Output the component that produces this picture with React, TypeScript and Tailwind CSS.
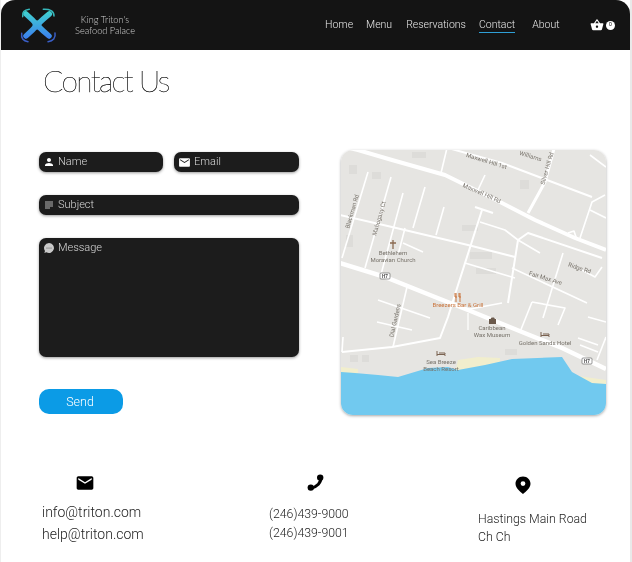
import { MdEmail, MdPerson, MdShoppingBasket, MdSubject } from "react-icons/md";
import type { ReactNode } from "react";

const roboto = "font-['Roboto',sans-serif]";

const navLinks = [
  { label: "Home", className: "border-transparent" },
  { label: "Menu", className: "ml-[13px] border-transparent" },
  { label: "Reservations", className: "ml-[14px] border-transparent" },
  { label: "Contact", className: "ml-[13px] border-[#2f9fd6]" },
  { label: "About", className: "ml-[17px] border-transparent" },
];

// every road is [width, points], in page coordinates
const roads: [number, string][] = [
  [4, "340,146 358,150 392,160 445,175 502,203 535,220 575,238 606,250"],
  [2, "448,148 502,163 592,197"],
  [3, "555,145 545,182 528,213"],
  [4.5, "340,263 385,277 435,297 468,310 522,332 562,348 606,369"],
  [2, "340,215 392,227 468,245 515,257"],
  [1.6, "368,172 342,258"],
  [1.6, "391,177 365,268"],
  [1.6, "403,193 380,278"],
  [1.6, "425,187 413,228"],
  [1.6, "444,207 436,235"],
  [1.6, "447,148 441,173"],
  [1.6, "485,175 477,192"],
  [2, "482,210 458,285 448,317 440,338 392,347 342,352"],
  [2, "475,207 493,213"],
  [1.6, "480,222 505,230 518,240 540,253"],
  [2, "508,303 518,240 528,233 602,258"],
  [1.6, "502,303 465,310"],
  [1.6, "465,263 515,278"],
  [1.6, "512,268 587,303"],
  [1.6, "563,253 543,318"],
  [1.6, "532,302 520,332"],
  [1.6, "532,302 565,308 558,325"],
  [1.6, "602,267 595,277 582,270"],
  [1.6, "605,195 592,202 580,238"],
  [1.6, "590,210 606,218"],
  [1.6, "590,155 606,167"],
  [1.6, "403,243 423,252"],
  [1.6, "405,228 398,255"],
  [1.6, "407,287 393,347"],
  [1.6, "378,300 430,318"],
  [1.6, "377,322 412,330"],
  [1.6, "343,337 342,352"],
  [1.2, "468,313 468,330"],
  [1.6, "588,317 606,322"],
  [1.6, "578,338 598,345"],
  [1.6, "580,345 598,352"],
  [1.6, "606,337 597,360"],
  [1.6, "568,233 574,231 577,240"],
];

const buildings = [
  "M349 165h8v9h-8z",
  "M372 172h9v7h-9z",
  "M346 235h7v12h-7z",
  "M412 152h14v6h-14z",
  "M462 225h16v6h-16z",
  "M470 252h22v7h-22z",
  "M476 268h20v6h-20z",
  "M520 180h9v9h-9z",
  "M505 355h12v-6h-12z",
  "M350 362h8v-7h-8z",
  "M362 362h7v-7h-7z",
];

const mapLabels: { x: number; y: number; text: string; fill?: string; rotate?: number }[] = [
  { x: 354, y: 212, text: "Blackman Rd", rotate: -74 },
  { x: 381, y: 219, text: "Mahogany Ct", rotate: -74 },
  { x: 486, y: 163, text: "Maxwell Hill 1st", rotate: 17 },
  { x: 481, y: 195, text: "Maxwell Hill Rd", rotate: 24 },
  { x: 549, y: 169, text: "Silver Hill Rd", rotate: -74 },
  { x: 530, y: 158, text: "Williams", rotate: 17 },
  { x: 545, y: 280, text: "Fair Max Ave", rotate: 17 },
  { x: 579, y: 270, text: "Ridge Rd", rotate: 18 },
  { x: 397, y: 321, text: "Dial Gardens", rotate: -77 },
  { x: 393, y: 255, text: "Bethlehem" },
  { x: 393, y: 262, text: "Moravian Church" },
  { x: 458, y: 307, text: "Breezers Bar & Grill", fill: "#c9743c" },
  { x: 492, y: 330, text: "Caribbean" },
  { x: 492, y: 337, text: "Wax Museum" },
  { x: 545, y: 345, text: "Golden Sands Hotel" },
  { x: 441, y: 364, text: "Sea Breeze" },
  { x: 441, y: 371, text: "Beach Resort" },
];

function Logo() {
  return (
    <svg width="40" height="40" viewBox="0 0 40 40" fill="none" className="shrink-0">
      <defs>
        <linearGradient id="droneBody" gradientUnits="userSpaceOnUse" x1="0" y1="7" x2="0" y2="33">
          <stop offset="0" stopColor="#40d0d0" />
          <stop offset="1" stopColor="#3b80ee" />
        </linearGradient>
      </defs>
      <path
        d="M7 9 Q14 15 18 20 Q24 14 30.3 9 M7 31 Q14 25 18 20 Q24 26 30 31"
        stroke="url(#droneBody)"
        strokeWidth="5.5"
        strokeLinecap="round"
      />
      <circle cx="18" cy="20" r="4.5" fill="url(#droneBody)" />
      <g strokeWidth="1.5" strokeLinecap="round">
        <path d="M3.7 11.7 C3 7 5 5 10.3 4.3" stroke="#36b8bb" />
        <path d="M24.3 4.3 C31 4 35 6 35 11" stroke="#36b8bb" />
        <path d="M2.7 28.3 C2 33 4 36 9 36.7" stroke="#3a5fc8" />
        <path d="M36 28 C37 33 34 36 29 36.7" stroke="#3a5fc8" />
      </g>
    </svg>
  );
}

function Header() {
  return (
    <header className="flex h-[50px] items-center rounded-t-[14px] bg-[#141414] pl-[18px] pr-[15px]">
      <Logo />
      <div className="ml-[11px] w-[70px] text-center font-['Lato',sans-serif] text-[9.2px] font-light leading-[11px] text-[#d4d4d4]">
        <div>King Triton's</div>
        <div>Seafood Palace</div>
      </div>
      <nav className={`ml-[185px] mt-[1px] flex items-center text-[10.5px] font-light text-[#e8e8e8] ${roboto}`}>
        {navLinks.map((link) => (
          <a key={link.label} className={`border-b leading-[14px] ${link.className}`}>
            {link.label}
          </a>
        ))}
      </nav>
      <div className="ml-auto flex items-center gap-[2px]">
        <MdShoppingBasket className="text-white" size={14} />
        <span className={`flex h-[9px] w-[9px] items-center justify-center rounded-full bg-white text-[5px] text-black ${roboto}`}>0</span>
      </div>
    </header>
  );
}

function Field({ icon, label, className }: { icon: ReactNode; label: string; className: string }) {
  return (
    <div className={`rounded-[7px] bg-[#1c1c1c] shadow-[0_1px_3px_rgba(0,0,0,0.4)] ${className}`}>
      <div className={`flex h-[20px] items-center gap-[3px] pl-[4px] text-[11px] font-light text-[#d8d8d8] ${roboto}`}>
        {icon}
        <span>{label}</span>
      </div>
    </div>
  );
}

function MessageIcon() {
  return (
    <svg width="12" height="12" viewBox="0 0 12 12" className="shrink-0">
      <path d="M6 1a5 5 0 1 1-2.6 9.3L1.3 11l.7-2.1A5 5 0 0 1 6 1z" fill="#c9c9c9" />
      <circle cx="4" cy="6" r="0.6" fill="#555555" />
      <circle cx="6" cy="6" r="0.6" fill="#555555" />
      <circle cx="8" cy="6" r="0.6" fill="#555555" />
    </svg>
  );
}

function PhoneIcon() {
  return (
    <svg width="18" height="18" viewBox="0 0 18 18" className="ml-[38px] block">
      <path d="M14 3 C14.5 8.5 10 13 3.5 14.5" fill="none" stroke="#000000" strokeWidth="3" />
      <circle cx="13.2" cy="3.6" r="3.2" fill="#000000" />
      <circle cx="3.8" cy="13.6" r="3.2" fill="#000000" />
    </svg>
  );
}

function PinIcon() {
  return (
    <svg width="16" height="18" viewBox="0 0 16 18" className="ml-[37px] block">
      <path
        fillRule="evenodd"
        d="M8 0.5C3.6 0.5 0.5 3.8 0.5 7.8C0.5 12 5 15.5 8 18C11 15.5 15.5 12 15.5 7.8C15.5 3.8 12.4 0.5 8 0.5ZM8 5.2A2.4 2.4 0 1 1 8 10A2.4 2.4 0 1 1 8 5.2Z"
        fill="#000000"
      />
    </svg>
  );
}

function MapView() {
  return (
    <div className="ml-[42px] h-[265px] w-[265px] overflow-hidden rounded-[12px] shadow-[0_1px_3px_rgba(0,0,0,0.35)]">
      <svg width="265" height="265" viewBox="341 150 265 265" className="block bg-[#e6e5e2]">
        {buildings.map((d) => (
          <path key={d} d={d} fill="#dddcd9" />
        ))}
        <path d="M341 367 L358 369 L358 376 L341 376 Z" fill="#f1eecd" />
        <path d="M455 372 L458 360 L478 357 L500 358 L500 372 Z" fill="#f1eecd" />
        <path d="M578 376 L606 380 L606 388 L585 385 Z" fill="#f1eecd" />
        {roads.map(([width, points]) => (
          <polyline key={points} points={points} fill="none" stroke="#ffffff" strokeWidth={width} strokeLinejoin="round" />
        ))}
        <path d="M341 372 L355 373 L378 375 L398 377 L428 368 L448 367 L458 370 L485 365 L512 359 L562 357 L572 372 L592 383 L606 384 L606 415 L341 415 Z" fill="#71c9ef" />
        <g fontFamily="Roboto, sans-serif" fontSize="6" fill="#77726a" textAnchor="middle">
          {mapLabels.map((item) => (
            <text
              key={item.text}
              x={item.x}
              y={item.y}
              fill={item.fill}
              transform={item.rotate ? `rotate(${item.rotate} ${item.x} ${item.y})` : undefined}
            >
              {item.text}
            </text>
          ))}
        </g>
        <path d="M393 240 V249 M390 243 H396" stroke="#8a6a50" strokeWidth="1.3" />
        <path d="M456 293 V302 M460 293 V302 M455 293 V297 H457 M459 293 V297 H461" stroke="#c9743c" strokeWidth="1" fill="none" />
        <path d="M489 319 H490.5 L491.5 317.5 H494 L495 319 H496 V324 H489 Z" fill="#6b5a4c" />
        <g fill="none" stroke="#7a6250" strokeWidth="1">
          <path d="M437 351 V356 M437 354.5 H445 V356" />
          <path d="M439 353 H445 V354" />
          <path d="M541 332 V337 M541 335.5 H549 V337" />
          <path d="M543 334 H549 V335" />
        </g>
        <g fontFamily="Roboto, sans-serif" fontSize="4.5" fontWeight="700" fill="#444444" textAnchor="middle">
          <rect x="380" y="273" width="10" height="6" rx="1" fill="#ffffff" stroke="#555555" strokeWidth="0.6" />
          <text x="385" y="278">H7</text>
          <rect x="582" y="358" width="10" height="6" rx="1" fill="#ffffff" stroke="#555555" strokeWidth="0.6" />
          <text x="587" y="363">H7</text>
        </g>
      </svg>
    </div>
  );
}

function ContactForm() {
  return (
    <div className="mt-[2px] flex w-[260px] flex-col">
      <div className="flex gap-[11px]">
        <Field className="w-[124px]" label="Name" icon={<MdPerson size={12} className="text-white" />} />
        <Field className="w-[125px]" label="Email" icon={<MdEmail size={13} className="text-white" />} />
      </div>
      <Field className="mt-[23px]" label="Subject" icon={<MdSubject size={12} className="text-[#b5b5b5]" />} />
      <Field className="mt-[23px] h-[119px]" label="Message" icon={<MessageIcon />} />
      <button className={`mt-[32px] h-[25px] w-[84px] rounded-[10px] bg-[#0b9be6] pr-[2px] pt-[2px] text-[12.5px] font-light text-white ${roboto}`}>
        Send
      </button>
    </div>
  );
}

function Footer() {
  return (
    <footer className={`mt-[58px] flex items-start font-light text-[#222222] ${roboto}`}>
      <div className="ml-[41px] w-[227px]">
        <MdEmail size={20} className="ml-[33px] text-black" />
        <div className="mt-[8px] text-[14px] leading-[22px]">
          <div>info@triton.com</div>
          <div>help@triton.com</div>
        </div>
      </div>
      <div className="mt-[1px] w-[209px]">
        <PhoneIcon />
        <div className="mt-[13px] text-[12.3px] leading-[19px]">
          <div>(246)439-9000</div>
          <div>(246)439-9001</div>
        </div>
      </div>
      <div className="mt-[3px]">
        <PinIcon />
        <div className="mt-[16px] text-[12.3px] leading-[18px]">
          <div>Hastings Main Road</div>
          <div>Ch Ch</div>
        </div>
      </div>
    </footer>
  );
}

export default function App() {
  return (
    <div className="flex h-[562px] w-[632px] overflow-hidden [will-change:transform]">
      <div className="w-[630px] border-l border-[#eeeeee]">
        <Header />
        <h1 className="ml-[42px] mt-[12px] font-['Lato',sans-serif] text-[30px] font-thin leading-[36px] tracking-[-1.7px] text-black [-webkit-text-stroke:0.25px_#000000]">
          Contact Us
        </h1>
        <main className="ml-[38px] mt-[52px] flex">
          <ContactForm />
          <MapView />
        </main>
        <Footer />
      </div>
      <div className="w-[2px] bg-[#e9e9e9]" />
    </div>
  );
}
